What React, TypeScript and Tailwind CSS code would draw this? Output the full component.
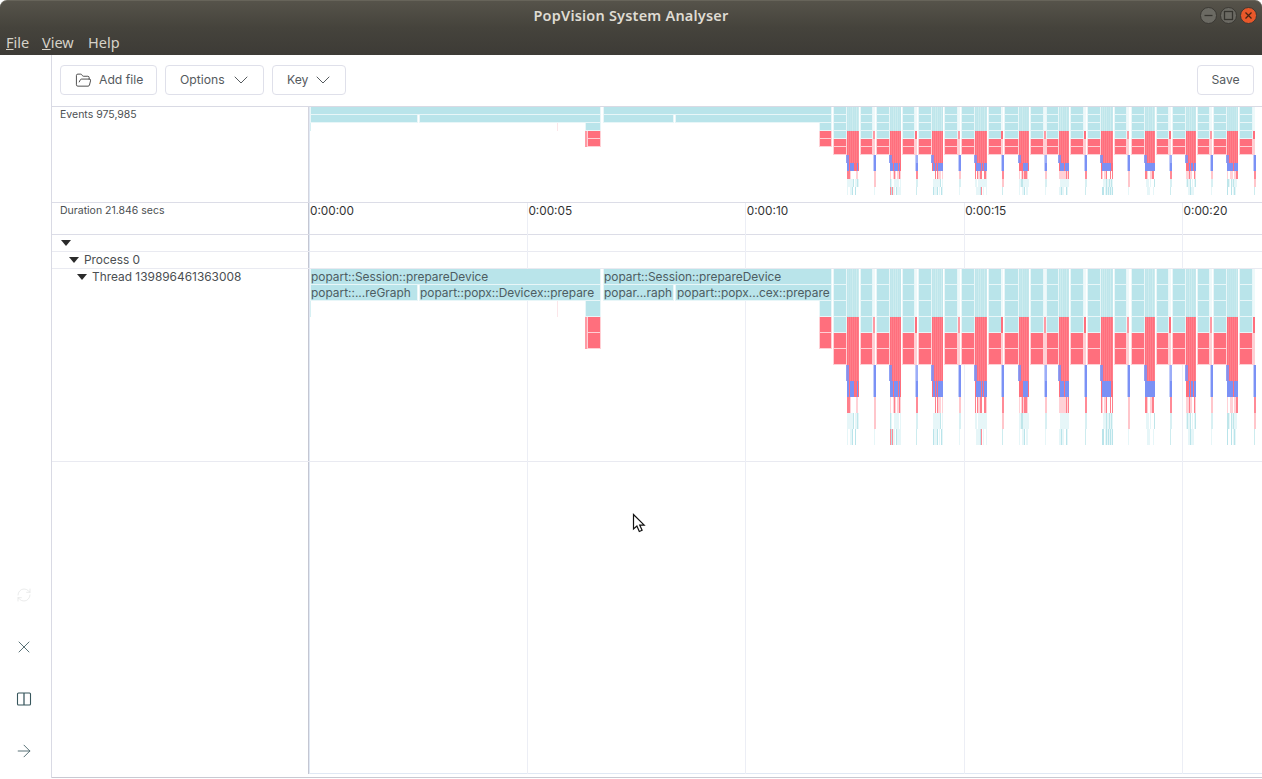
import React from "react";
import { ArrowRight, ChevronDown, FolderOpen, RefreshCw, X } from "lucide-react";

const BLUE = "#b9e4ea";
const RED = "#ff6f7d";
const INDIGO = "#7b91f5";

const bursts: [number, number][] = [[847,859],[890,901],[932,943],[975,987],[1019,1029],[1059,1069],[1101,1113],[1145,1155],[1186,1196],[1227,1238]];
const blocks: [number, number][] = [[833,847],[860,873],[876,890],[902,915],[918,932],[944,958],[961,975],[988,1002],[1004,1019],[1030,1044],[1046,1059],[1070,1084],[1087,1101],[1114,1127],[1131,1145],[1156,1169],[1172,1186],[1197,1210],[1213,1227],[1239,1253]];
const gaps: number[] = [873,915,958,1001,1044,1084,1127,1169,1210,1253];

function h(a: number, b: number) {
  const v = Math.sin(a * 12.9898 + b * 78.233) * 43758.5453;
  return v - Math.floor(v);
}

type R = { x: number; r: number; w: number; rows: number; c: string; o: number };

function buildRects(): R[] {
  const out: R[] = [];
  const add = (x: number, r: number, w: number, c: string, rows = 1, o = 1) => out.push({ x: x - 310, r, w, c, rows, o });
  add(310, 0, 291, BLUE); add(603, 0, 229, BLUE);
  add(310, 1, 108, BLUE); add(419, 1, 182, BLUE); add(603, 1, 71, BLUE); add(675, 1, 157, BLUE);
  add(585, 2, 16, BLUE); add(819, 2, 13, BLUE);
  add(585, 3, 2, "#ff9aa4"); add(587, 3, 14, RED); add(585, 4, 2, "#ff9aa4"); add(587, 4, 14, RED);
  add(819, 3, 13, RED); add(819, 4, 13, RED);
  add(310, 2, 1, "#d7f0f3");
  add(557, 2, 1, "#fbe6e9");
  blocks.forEach(([a, b]) => {
    const w = b - a;
    for (let r = 0; r < 4; r++) add(a, r, w, BLUE);
    add(a, 4, w, RED);
    add(a, 5, w, RED);
  });
  gaps.forEach((x, i) => {
    for (let r = 0; r < 3; r++) add(x, r, 2, "#eef9fa");
    add(x, 3, 2, i % 2 ? RED : "#ff9aa4");
    add(x, 4, 2, "#ffd0d4");
    add(x, 5, 2, "#ffd0d4");
    add(x, 6, 1, "#c3cefa");
    add(x + 1, 6, 2, INDIGO, 1, i % 3 === 1 ? 0.75 : 1);
    add(x, 7, 1, "#c3cefa");
    add(x + 1, 7, 2, INDIGO);
    add(x + 1, 8, 2, i % 2 ? "#ff8a96" : "#ffc6cb");
    add(x + 1, 9, 2, i % 3 === 0 ? "#ffc6cb" : "#d8f0f3");
    add(x + 1, 10, 1, i % 2 ? "#cdecef" : "#e6f6f8");
  });
  bursts.forEach(([a, b], i) => {
    const w = b - a;
    add(a, 0, w, "#bfe6eb", 3);
    for (let k = a + 1; k < b; k += 2) add(k, 0, 1, "#cdecef", 3, h(k, i) > 0.45 ? 1 : 0.4);
    add(a, 3, w, RED, 4);
    for (let k = a + 1; k < b; k += 2) add(k, 3, 1, "#ff8c98", 4, 0.55);
    add(a - 1, 6, 3, INDIGO, 1, 0.85);
    for (let k = a; k < b; k++) {
      const v = h(k, 2);
      add(k, 7, 1, v > 0.78 ? RED : INDIGO);
      const r8 = h(k, 3);
      if (r8 > 0.3) add(k, 8, 1, r8 > 0.7 ? "#ff7f8b" : "#ffd1d6");
      const r9 = h(k, 4);
      if (r9 > 0.2) add(k, 9, 1, r9 > 0.85 ? "#bfe6ea" : "#e6f6f8");
      const r10 = h(k, 5);
      if (r10 > 0.45) add(k, 10, 1, r10 > 0.96 ? "#ff8c98" : r10 > 0.82 ? "#b9e4ea" : "#e6f6f8");
    }
  });
  return out;
}
const rects = buildRects();

function Flame({ rowH, height, labels }: { rowH: number; height: number; labels?: boolean }) {
  return (
    <svg width={952} height={height} viewBox={`0 0 952 ${height}`} shapeRendering="crispEdges" className="block relative z-10">
      {rects.map((q, i) => {
        const y = q.r * rowH;
        const hh = q.rows * rowH;
        const boxed = q.w > 3 && q.rows === 1;
        if (!boxed) {
          return <rect key={i} x={q.x} y={y} width={q.w} height={hh} fill={q.c} opacity={q.o} />;
        }
        const edge = q.c === RED ? "#ffd0d5" : "#e8f6f8";
        return (
          <g key={i}>
            <rect x={q.x} y={y} width={q.w} height={hh} fill={edge} />
            <rect x={q.x + 1} y={y} width={q.w - 2} height={hh - 1} fill={q.c} />
          </g>
        );
      })}
      {labels && (
        <g className="font-['Inter',sans-serif] text-[11.9px]" fill="#4d5d62">
          <text x={1} y={12}>popart::Session::prepareDevice</text>
          <text x={294} y={12}>popart::Session::prepareDevice</text>
          <text x={1} y={28}>popart::...reGraph</text>
          <text x={110} y={28}>popart::popx::Devicex::prepare</text>
          <text x={294} y={28}>popar...raph</text>
          <text x={367} y={28}>popart::popx...cex::prepare</text>
        </g>
      )}
    </svg>
  );
}

function Tri() {
  return (
    <svg width="10" height="6" viewBox="0 0 10 6" className="shrink-0">
      <polygon points="0,0 10,0 5,6" fill="#2b2b2b" />
    </svg>
  );
}

function WinBtn({ kind }: { kind: "min" | "max" | "close" }) {
  const close = kind === "close";
  return (
    <div className={`w-[17px] h-[17px] rounded-full flex items-center justify-center border border-[#3a3833] ${close ? "bg-[#e9582a]" : "bg-[#6b6a63]"}`}>
      <svg width="11" height="11" viewBox="0 0 11 11" fill="none" stroke={close ? "#4a2412" : "#35342f"} strokeWidth="1.3">
        {kind === "min" && <path d="M1.5 5.5h8" />}
        {kind === "max" && <rect x="1.5" y="1.5" width="8" height="8" />}
        {close && <path d="M2.5 2.5l6 6M8.5 2.5l-6 6" />}
      </svg>
    </div>
  );
}

function Btn({ children, className }: { children: React.ReactNode; className: string }) {
  return (
    <div className={`h-[30px] flex items-center rounded-[4px] border border-[#dfe0ea] text-[12.2px] text-[#555a5e] ${className}`}>
      {children}
    </div>
  );
}

export default function App() {
  return (
    <div className="w-[1262px] h-[779px] overflow-hidden bg-white relative font-['Inter',sans-serif]">
      <header className="h-[55px] rounded-t-[7px] bg-gradient-to-b from-[#56534a] via-[#45433c] to-[#3d3b36] border-t border-[#67645a] font-['Noto_Sans',sans-serif]">
        <div className="h-[29px] grid grid-cols-[1fr_auto_1fr] items-center">
          <div />
          <div className="text-[14.5px] font-semibold text-[#dfdbd2] tracking-[0.2px]">PopVision System Analyser</div>
          <div className="flex justify-end gap-[3px] pr-[5px]">
            <WinBtn kind="min" />
            <WinBtn kind="max" />
            <WinBtn kind="close" />
          </div>
        </div>
        <nav className="flex text-[14.5px] leading-[24px] text-[#d6d2c8] pl-[6px]">
          <span className="w-[36px]"><u>F</u>ile</span>
          <span className="w-[46px]"><u>V</u>iew</span>
          <span>Help</span>
        </nav>
      </header>

      <div className="flex h-[723px]">
        <aside className="w-[52px] shrink-0 border-r border-[#d9dae4] flex flex-col justify-end items-center pr-[3px] pb-px">
          <div className="h-[52px] flex items-center justify-center text-[#e2e4e4]"><RefreshCw size={16} strokeWidth={1.1} /></div>
          <div className="h-[52px] flex items-center justify-center text-[#37565c]"><X size={20} strokeWidth={1} /></div>
          <div className="h-[52px] flex items-center justify-center text-[#37565c]">
            <svg width="16" height="14" viewBox="0 0 16 14" fill="none" stroke="currentColor" strokeWidth="1.1">
              <rect x="1.5" y="1" width="13" height="12" rx="1" />
              <path d="M8 1v12" strokeWidth="1.8" opacity="0.7" />
            </svg>
          </div>
          <div className="h-[52px] flex items-center justify-center text-[#37565c]"><ArrowRight size={20} strokeWidth={1} /></div>
        </aside>

        <main className="flex-1 min-w-0 flex flex-col border-b border-[#c9c9d2]">
          <div className="h-[52px] border-b border-[#d9dae4] flex items-start justify-between pl-[8px] pr-[8px] pt-[10px]">
            <div className="flex gap-[8px]">
              <Btn className="w-[97px] pl-[14px] gap-[7px]"><FolderOpen size={17} strokeWidth={1.1} className="text-[#222]" />Add file</Btn>
              <Btn className="w-[99px] pl-[14px] gap-[4px]">Options<ChevronDown size={24} strokeWidth={1} /></Btn>
              <Btn className="w-[74px] pl-[14px] gap-[3px]">Key<ChevronDown size={24} strokeWidth={1} /></Btn>
            </div>
            <Btn className="w-[57px] justify-center">Save</Btn>
          </div>

          <div className="h-[96px] flex border-b border-[#dcdde7]">
            <div className="w-[257px] shrink-0 border-r border-[#d3d4de] pl-[8px] pt-px text-[10.5px] leading-[14px] text-[#4b4f52]">Events 975,985</div>
            <div className="flex-1 min-w-0 overflow-hidden border-l border-[#e0e8f4]"><Flame rowH={8} height={95} /></div>
          </div>

          <div className="relative">
            <div className="absolute inset-0 pointer-events-none">
              <div className="absolute top-0 h-[571px] left-[475px] w-px bg-[#eceef5]" />
              <div className="absolute top-0 h-[571px] left-[693px] w-px bg-[#eceef5]" />
              <div className="absolute top-0 h-[571px] left-[912px] w-px bg-[#eceef5]" />
              <div className="absolute top-0 h-[571px] left-[1130px] w-px bg-[#eceef5]" />
            </div>

            <div className="h-[32px] flex border-b border-[#dcdde7]">
              <div className="w-[257px] shrink-0 border-r border-[#c4c6d2] pl-[8px] pt-px text-[10.5px] leading-[14px] text-[#4b4f52]">Duration 21.846 secs</div>
              <div className="flex-1 min-w-0 flex text-[11.8px] leading-[14px] pt-[1px] text-[#333] border-l border-[#e0e8f4]">
                <span className="w-[218.4px]">0:00:00</span>
                <span className="w-[218.4px]">0:00:05</span>
                <span className="w-[218.4px]">0:00:10</span>
                <span className="w-[218.4px]">0:00:15</span>
                <span>0:00:20</span>
              </div>
            </div>

            <div className="h-[17px] flex border-b border-[#e9eaf1]">
              <div className="w-[257px] shrink-0 border-r border-[#c4c6d2] pl-[9px] flex items-center"><Tri /></div>
              <div className="flex-1 border-l border-[#e0e8f4]" />
            </div>
            <div className="h-[17px] flex border-b border-[#e9eaf1]">
              <div className="w-[257px] shrink-0 border-r border-[#c4c6d2] pl-[17px] flex items-center gap-[5px] text-[11.9px] text-[#4b4f52]"><Tri />Process 0</div>
              <div className="flex-1 border-l border-[#e0e8f4]" />
            </div>
            <div className="h-[193px] flex border-b border-[#e9eaf1]">
              <div className="w-[257px] shrink-0 border-r border-[#c4c6d2] pl-[25px] flex items-start gap-[5px] text-[11.9px] leading-[16px] text-[#4b4f52]">
                <span className="h-[16px] flex items-center"><Tri /></span>Thread 139896461363008
              </div>
              <div className="flex-1 min-w-0 overflow-hidden border-l border-[#e0e8f4]"><Flame rowH={16} height={192} labels /></div>
            </div>
            <div className="h-[312px] flex">
              <div className="w-[257px] shrink-0 border-r border-[#c4c6d2]" />
              <div className="flex-1 border-l border-b border-[#e0e8f4]" />
            </div>
          </div>
        </main>
      </div>

      <svg width="14" height="21" viewBox="0 0 14 21" className="absolute left-[632px] top-[513px] z-20">
        <path d="M1.5 1.5v14.5l3.4-3 2.4 5.5 2.8-1.2-2.4-5.2h4.5z" fill="#fff" stroke="#111" strokeWidth="1.2" />
      </svg>
    </div>
  );
}
